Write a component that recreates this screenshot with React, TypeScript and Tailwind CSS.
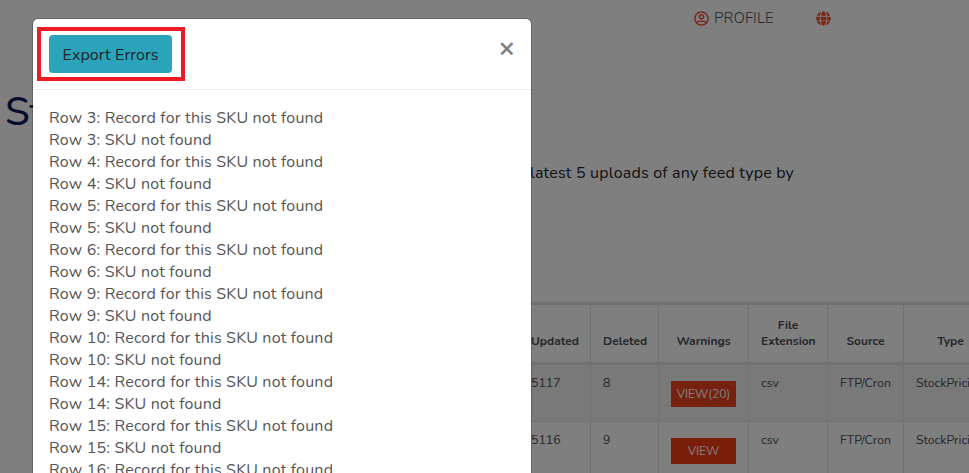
import React from 'react';
import { FaRegUserCircle, FaGlobe } from 'react-icons/fa';

const rows = [3, 4, 5, 6, 9, 10, 14, 15, 16];

const feedRows = [
  { updated: '5117', deleted: '8', warn: 'VIEW(20)', warnClass: 'bg-[#ea4420]', rowClass: 'bg-[#f2f2f2]' },
  { updated: '5116', deleted: '9', warn: 'VIEW', warnClass: 'bg-[#f43c14]', rowClass: 'bg-white' },
];

const Th: React.FC<{ className: string; children: React.ReactNode }> = ({ className, children }) => (
  <th className={`${className} border border-[#dee2e6] border-b-[3px] px-3 pb-[13px] text-center align-bottom text-[12px] font-bold leading-4 text-[#495057]`}>
    {children}
  </th>
);

const Td: React.FC<{ children: React.ReactNode }> = ({ children }) => (
  <td className="border border-[#dee2e6] px-3 pt-[7px] align-top text-[12.3px] leading-[22px] text-[#495057]">{children}</td>
);

export default function App() {
  return (
    <div className="relative h-[473px] w-[969px] overflow-hidden bg-white font-['Nunito','Mulish','Noto_Sans',sans-serif]">
      {/* page behind the modal */}
      <div className="flex h-[36px] items-center pl-[694px] text-[#495057]">
        <FaRegUserCircle className="text-[15px] text-[#f44a28]" />
        <span className="ml-[5px] text-[15px] font-light tracking-[0.1px]">PROFILE</span>
        <FaGlobe className="ml-[42px] text-[15px] text-[#f44a28]" />
      </div>
      <h1 className="mt-[48px] pl-[5px] text-[40px] font-medium leading-[56px] text-[#101a5a]">Stock Feed</h1>
      <p className="mt-[21px] pl-[530px] text-[16px] leading-6 tracking-[0.2px] text-[#212529]">latest 5 uploads of any feed type by</p>
      <table className="mt-[117px] ml-[518px] w-[479px] table-fixed border-collapse border-t-[3px] border-[#dee2e6]">
        <thead>
          <tr className="h-[60px]">
            <Th className="w-[72px]">Updated</Th>
            <Th className="w-[68px]">Deleted</Th>
            <Th className="w-[90px]">Warnings</Th>
            <Th className="w-[79px]">File Extension</Th>
            <Th className="w-[76px]">Source</Th>
            <Th className="w-[94px]">Type</Th>
          </tr>
        </thead>
        <tbody>
          {feedRows.map(r => (
            <tr key={r.updated} className={`h-[58px] ${r.rowClass}`}>
              <Td>{r.updated}</Td>
              <Td>{r.deleted}</Td>
              <td className="border border-[#dee2e6] px-3 pt-[16px] pb-[14px] align-top">
                <div className={`${r.warnClass} flex h-[26px] items-center justify-center text-[12px] text-white`}>{r.warn}</div>
              </td>
              <Td>csv</Td>
              <Td>FTP/Cron</Td>
              <Td>StockPricing</Td>
            </tr>
          ))}
        </tbody>
      </table>

      {/* backdrop and modal */}
      <div className="absolute inset-0 bg-black/50" />
      <div className="absolute left-[33px] top-[19px] w-[498px] rounded-[5px] bg-white ring-1 ring-black/20">
        <div className="flex h-[71px] items-start justify-between border-b border-[#e9ecef] pl-[4px] pr-[16px] pt-[8px]">
          <div className="border-[4px] border-[#ed1c24] py-[4px] pl-[8px] pr-[9px]">
            <button className="flex h-[38px] w-[123px] items-center justify-center rounded-[4px] bg-[#2aa3bb] pt-[1px] text-[16px] tracking-[0.1px] text-[#212529]">
              Export Errors
            </button>
          </div>
          <button className="mt-[7px] font-['Noto_Sans',sans-serif] text-[29px] font-medium leading-7 text-[#808080]">×</button>
        </div>
        <div className="px-4 pt-[17px] text-[16px] leading-[22px] tracking-[0.2px] text-[#555555]">
          {rows.map(n => (
            <React.Fragment key={n}>
              <div>Row {n}: Record for this SKU not found</div>
              <div>Row {n}: SKU not found</div>
            </React.Fragment>
          ))}
        </div>
      </div>
    </div>
  );
}
